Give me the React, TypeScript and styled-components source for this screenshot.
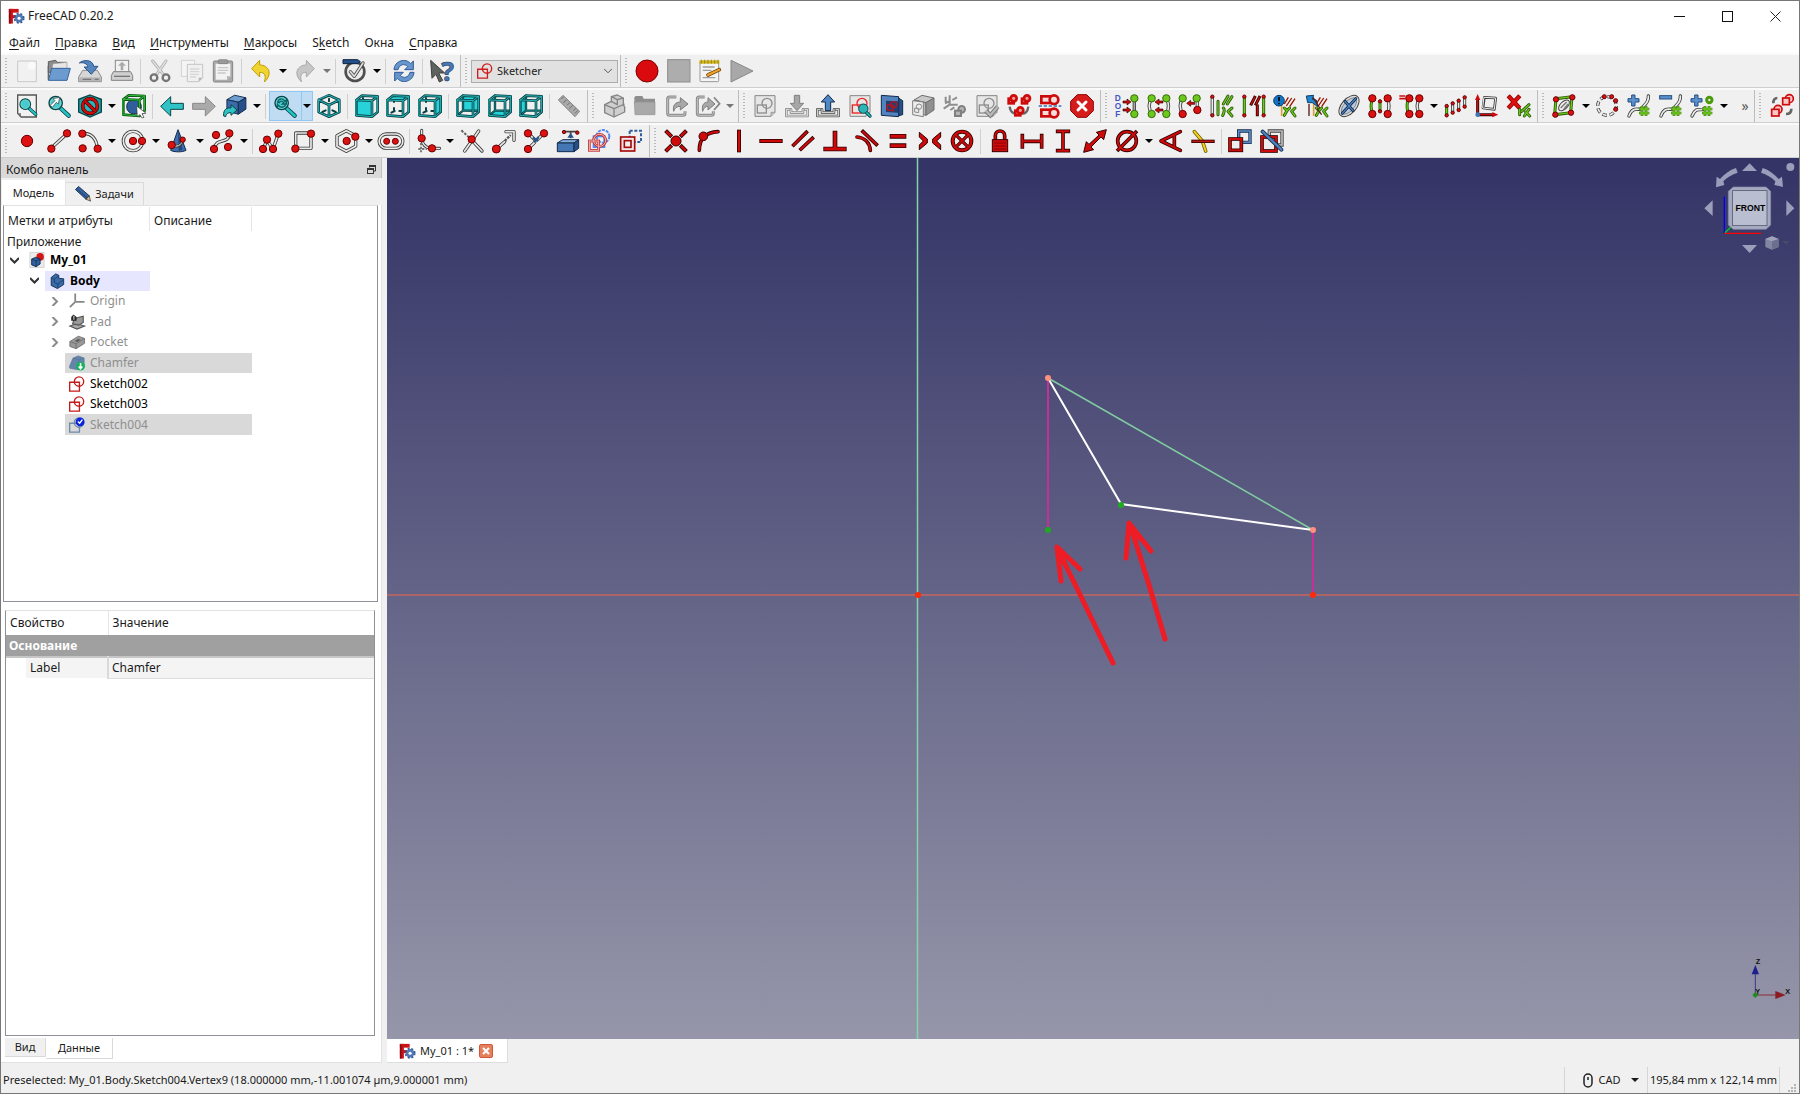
import React, { ReactNode } from "react";
import styled, { createGlobalStyle } from "styled-components";

const UI_FONT = '"Noto Sans", "Open Sans", sans-serif';

const GlobalStyle = createGlobalStyle`
  *, *::before, *::after { box-sizing: border-box; }
  body { margin: 0; background: #6e6e6e; overflow: hidden; }
  button, select, table { font: inherit; color: inherit; }
  button { border: 0; padding: 0; margin: 0; background: none; }
  ul { list-style: none; margin: 0; padding: 0; }
`;

/* ---------- drawing primitives (icons use a 72-unit box) ---------- */

const RED = "#cf0a0a";
const DARK_RED = "#330000";
const TEAL = "#22c3c6";
const DARK_TEAL = "#0a4446";
const BLUE = "#4d82bd";
const NAVY = "#122a4a";
const GREEN = "#6cc81c";
const GREY = "#a9a9a9";
const DARK_GREY = "#858585";

type LineProps = { d: string; w?: number; c?: string; o?: string };
const Tube = ({ d, w = 5, c = "#ececec", o = "#3b3d3a" }: LineProps) => (
  <g fill="none" strokeLinecap="round" strokeLinejoin="round">
    <path d={d} stroke={o} strokeWidth={w + 5} />
    <path d={d} stroke={c} strokeWidth={w} />
  </g>
);
const Bar3 = ({ d, w = 7, c = RED, o = DARK_RED }: LineProps) => (
  <g fill="none" strokeLinecap="square" strokeLinejoin="miter">
    <path d={d} stroke={o} strokeWidth={w + 5} />
    <path d={d} stroke={c} strokeWidth={w} />
  </g>
);
const Dot = ({ x, y, r = 11, c = "#dc1212", o = "#6a0000" }: { x: number; y: number; r?: number; c?: string; o?: string }) => (
  <circle cx={x} cy={y} r={r} fill={c} stroke={o} strokeWidth="3" />
);
const Glass = ({ x = 0, y = 0, s = 1, children }: { x?: number; y?: number; s?: number; children?: ReactNode }) => (
  <g transform={`translate(${x} ${y}) scale(${s})`}>
    <Tube d="M40 42L65 65" w={8} c={TEAL} o={DARK_TEAL} />
    <circle cx="26" cy="27" r="20" fill="#35b9bb" stroke={DARK_TEAL} strokeWidth="4" />
    <circle cx="26" cy="27" r="16" fill="#49cbcd" stroke="#8fe6e7" strokeWidth="2" />
    {children}
  </g>
);
const SketchShape = ({ c = RED, w = 6 }: { c?: string; w?: number }) => (
  <g fill="none" stroke={c} strokeWidth={w}>
    <path d="M3 28H47V68H3Z" />
    <circle cx="45" cy="25" r="21" />
  </g>
);
const SketchPage = ({ c = "#8e8e8e" }: { c?: string }) => (
  <>
    <path d="M6 5H66V55L54 67H6Z" fill="#e6e6e6" stroke="#858585" strokeWidth="3" />
    <path d="M54 67V55H66" fill="#c5c5c5" stroke="#858585" strokeWidth="2" />
    <rect x="13" y="33" width="27" height="24" fill="none" stroke={c} strokeWidth="4" />
    <circle cx="42" cy="28" r="15" fill="none" stroke={c} strokeWidth="4" />
  </>
);
const WIRE = {
  front: "4,18 51,20 51,68 4,64",
  top: "4,18 51,20 68,7 21,5",
  right: "51,20 68,7 68,54 51,68",
  rear: "21,5 68,7 68,54 21,50",
  bottom: "4,64 51,68 68,54 21,50",
  left: "4,18 21,5 21,50 4,64",
};
const ViewCube = ({ face }: { face: keyof typeof WIRE }) => {
  const inFront = face === "front" || face === "top" || face === "right";
  const fill = <polygon points={WIRE[face]} fill="#27d3d8" stroke={DARK_TEAL} strokeWidth="2" />;
  return (
    <>
      {!inFront && fill}
      {!inFront && <Tube d="M21 5V50H66M21 50L4 64" w={2} c="#1c9a9c" o={DARK_TEAL} />}
      {inFront && <Tube d="M24 12V24M24 42V48M26 51L16 56M40 51H46" w={1} c={DARK_TEAL} o={DARK_TEAL} />}
      {inFront && fill}
      <Tube d="M4 18L51 20V68L4 64ZM4 18L21 5L68 7L51 20M68 7V54L51 68" w={3} c="#27b9bd" o={DARK_TEAL} />
    </>
  );
};
const SolidCube = ({ a = "#6f9fd2", b = "#3b6ba8", c = "#27508a", o = NAVY, t = "" }) => (
  <g transform={t} stroke={o} strokeWidth="3" strokeLinejoin="round">
    <path d="M6 20L30 6L66 14L42 28Z" fill={a} />
    <path d="M6 20L42 28V66L6 56Z" fill={b} />
    <path d="M42 28L66 14V50L42 66Z" fill={c} />
  </g>
);
const Tray = ({ c }: { c: string }) => <Tube d="M12 46H4V66H68V46H60M18 46V56H54V46" w={3} c="#e8e8e8" o={c} />;
const Caliper = ({ d }: { d: string }) => <Tube d={d} w={4} c={GREEN} o="#2c5a06" />;
const Hash = ({ x = 34, y = 34 }: { x?: number; y?: number }) => (
  <g transform={`translate(${x} ${y})`}>
    <path d="M11 2V32M23 2V32M2 11H33M2 23H33" stroke="#3b7a08" strokeWidth="8" />
    <path d="M11 3V31M23 3V31M3 11H32M3 23H32" stroke={GREEN} strokeWidth="4" />
  </g>
);
const SmallArrow = ({ x, y, left = false }: { x: number; y: number; left?: boolean }) => (
  <path
    transform={`translate(${x} ${y})${left ? " scale(-1 1)" : ""}`}
    d="M-12 -3H0V-9L12 0L0 9V3H-12Z"
    fill={RED}
    stroke={DARK_RED}
    strokeWidth="2"
  />
);
const Linked = () => (
  <>
    <path d="M46 10L34 30M56 12L40 36M66 14L50 38" stroke="#9a1500" strokeWidth="4" />
    <path d="M26 14V66" stroke="#d9a03a" strokeWidth="5" />
    <Caliper d="M34 42L42 50L34 64M66 42L56 52L66 66M42 50L50 42" />
  </>
);

const icons: Record<string, ReactNode> = {
  newFile: (
    <>
      <path d="M8 6H64V68H8Z" fill="#f1f1f1" stroke="#c9c9c9" strokeWidth="3" />
      <circle cx="50" cy="20" r="12" fill="#fafafa" />
    </>
  ),
  open: (
    <>
      <path d="M4 8L26 4L30 10H58V40H4Z" fill="#8b8b8b" stroke="#5c5c5c" strokeWidth="3" />
      <path d="M18 14L60 10V34H14Z" fill="#e6e6e6" stroke="#999" strokeWidth="2" />
      <path d="M14 28H70L60 64H4Z" fill="#6c9bd0" stroke="#33639e" strokeWidth="3" />
      <path d="M4 20V62" stroke="#666" strokeWidth="4" />
    </>
  ),
  save: (
    <>
      <path d="M14 34H58L70 54V68H2V54Z" fill="#d6d6d6" stroke="#8b8b8b" strokeWidth="3" />
      <path d="M4 55H68V67H4Z" fill="#b5b5b5" />
      <path d="M14 61H40M50 61H62" stroke="#777" strokeWidth="4" />
      <path d="M4 12C14 2 44 0 47 22H60L40 46L18 24H30C28 14 16 9 4 12Z" fill="#5585bd" stroke="#2c578e" strokeWidth="3" />
    </>
  ),
  print: (
    <>
      <rect x="16" y="4" width="40" height="36" fill="#f1f1f1" stroke="#8a8a8a" strokeWidth="3" />
      <path d="M36 8L48 20H40V34H32V20H24Z" fill="#aaa" />
      <path d="M10 38H62L68 50V64H4V50Z" fill="#cfcfcf" stroke="#838383" strokeWidth="3" />
      <path d="M12 52H60" stroke="#777" strokeWidth="4" />
    </>
  ),
  cut: (
    <>
      <Tube d="M14 6L46 46M54 6L26 46" w={4} c="#e3e3e3" o="#ababab" />
      <g fill="none" stroke="#757575" strokeWidth="7">
        <circle cx="18" cy="56" r="10" />
        <circle cx="54" cy="56" r="10" />
      </g>
    </>
  ),
  copy: (
    <>
      <path d="M4 4H44V52H4Z" fill="#f4f4f4" stroke="#d2d2d2" strokeWidth="3" />
      <path d="M22 16H68V56L56 68H22Z" fill="#f0f0f0" stroke="#c4c4c4" strokeWidth="3" />
      <path d="M30 30H58M30 38H58M30 46H56M30 54H48" stroke="#d6d6d6" strokeWidth="4" />
      <path d="M56 68V56H68Z" fill="#b5b5b5" />
    </>
  ),
  paste: (
    <>
      <rect x="7" y="6" width="58" height="63" rx="4" fill="#aaa" stroke="#858585" strokeWidth="3" />
      <path d="M14 14H58V52L48 62H14Z" fill="#f2f2f2" />
      <rect x="22" y="2" width="28" height="12" rx="3" fill="#999" stroke="#777" strokeWidth="2" />
      <path d="M20 26H52M20 34H52M20 42H44" stroke="#c8c8c8" strokeWidth="4" />
      <path d="M48 62V52H58Z" fill="#b0b0b0" />
    </>
  ),
  undo: <path d="M32 4V18C60 18 72 46 46 69C52 50 48 40 32 40V54L8 29Z" fill="#f0d531" stroke="#c19a00" strokeWidth="3" />,
  redo: <path d="M40 4V18C12 18 0 46 26 69C20 50 24 40 40 40V54L64 29Z" fill="#c6c6c6" stroke="#a9a9a9" strokeWidth="3" />,
  check: (
    <>
      <circle cx="36" cy="38" r="28" fill="#ececec" stroke="#4c4f4b" strokeWidth="8" />
      <Tube d="M22 38L34 52L60 12" w={5} c="#ddd" o="#4a4c49" />
      <path d="M0 2H44L52 8L44 14H0Z" fill="#24508a" stroke="#0c2342" strokeWidth="3" />
    </>
  ),
  refresh: (
    <>
      <path d="M6 32C8 4 42 -4 56 14L64 6V32H38L47 23C38 12 22 16 18 32Z" fill="#6796cd" stroke="#2c5a99" strokeWidth="3" />
      <path d="M66 40C64 68 30 76 16 58L8 66V40H34L25 49C34 60 50 56 54 40Z" fill="#6796cd" stroke="#2c5a99" strokeWidth="3" />
    </>
  ),
  whatsThis: (
    <>
      <path d="M2 4L44 42H26L38 64L28 69L18 46L6 58Z" fill="#5f625e" stroke="#3e403d" strokeWidth="3" />
      <text x="34" y="66" fontSize="80" fontWeight="700" fontFamily={UI_FONT} fill="#4b76ad" stroke="#223f68" strokeWidth="2">?</text>
    </>
  ),
  record: <circle cx="36" cy="36" r="33" fill="#d90b0e" stroke="#7d0000" strokeWidth="3" />,
  stop: <rect x="2" y="2" width="67" height="67" fill="#adadad" stroke="#8c8c8c" strokeWidth="3" />,
  macroEdit: (
    <>
      <rect x="6" y="8" width="56" height="60" rx="3" fill="#f4f4f4" stroke="#999" strokeWidth="3" />
      <path d="M4 4H64V14H4Z" fill="#d3b61c" />
      <path d="M10 2V14M20 2V14M30 2V14M40 2V14M50 2V14M60 2V14" stroke="#7c6a10" strokeWidth="2" />
      <path d="M14 24H50M14 34H40M14 56H52" stroke="#9d9d9d" strokeWidth="4" />
      <Tube d="M30 48L64 32" w={6} c="#f0a32d" o="#7b4b06" />
    </>
  ),
  play: <path d="M3 4L69 36L3 69Z" fill="#a8a8a8" stroke="#888" strokeWidth="3" />,

  fitAll: (
    <>
      <path d="M8 3H64V69H18L8 58Z" fill="#f2f2f2" stroke="#555753" strokeWidth="4" />
      <path d="M8 58H18V69Z" fill="#777" />
      <Glass x={10} y={9} s={0.8} />
    </>
  ),
  fitSelection: (
    <Glass>
      <path d="M38 10L34 30L28 25L16 40L10 34L24 20L18 14Z" fill="#fff" stroke="#333" strokeWidth="2" />
    </Glass>
  ),
  drawStyle: (
    <>
      <path d="M36 3L70 16V54L36 69L2 54V16Z" fill="#1aa2a5" stroke={DARK_TEAL} strokeWidth="4" />
      <circle cx="36" cy="36" r="22" fill="#22b7ba" stroke="#4a0000" strokeWidth="11" />
      <circle cx="36" cy="36" r="22" fill="none" stroke={RED} strokeWidth="7" />
      <path d="M21 21L51 51" stroke="#4a0000" strokeWidth="11" />
      <path d="M21 21L51 51" stroke={RED} strokeWidth="7" />
    </>
  ),
  boundBox: (
    <>
      <circle cx="36" cy="38" r="22" fill="#2f5e9d" stroke={NAVY} strokeWidth="3" />
      <Tube d="M4 16L52 18V66L4 62ZM4 16L20 4L68 6L52 18M68 6V50L52 66" w={3} c="#2dc43a" o="#0c5414" />
      <path d="M44 36L72 58L60 59L66 70L60 72L54 62L46 68Z" fill="#fff" stroke="#333" strokeWidth="2" />
    </>
  ),
  back: <path d="M2 37L32 8V28H70V46H32V66Z" fill="#2fc3c6" stroke={DARK_TEAL} strokeWidth="3" />,
  forward: <path d="M70 37L40 8V28H2V46H40V66Z" fill="#aaa" stroke="#888" strokeWidth="3" />,
  linkGo: (
    <>
      <SolidCube t="translate(6 -2) scale(0.95)" />
      <path d="M2 66C0 46 12 40 24 42V32L42 48L24 64V56C16 56 10 58 8 68Z" fill="#2fc3c6" stroke={DARK_TEAL} strokeWidth="3" />
    </>
  ),
  zoomRefresh: (
    <Glass>
      <path d="M14 24C18 12 30 12 36 22L40 18V30H28L32 26C28 20 22 20 19 26ZM38 32C34 42 22 42 17 34L13 38V28" fill="none" stroke="#0d6264" strokeWidth="4" />
    </Glass>
  ),
  isometric: (
    <>
      <Tube d="M36 14V22M16 54L26 49M56 54L46 49" w={1} c={DARK_TEAL} o={DARK_TEAL} />
      <Tube d="M36 4L67 18V54L36 68L5 54V18ZM5 18L36 33L67 18M36 33V68" w={3} c="#27b9bd" o={DARK_TEAL} />
    </>
  ),
  front: <ViewCube face="front" />,
  top: <ViewCube face="top" />,
  right: <ViewCube face="right" />,
  rear: <ViewCube face="rear" />,
  bottom: <ViewCube face="bottom" />,
  left: <ViewCube face="left" />,
  measure: (
    <>
      <path d="M4 18L18 4L68 52L54 68Z" fill={GREY} stroke={DARK_GREY} strokeWidth="3" />
      <path d="M20 8L13 15M29 17L19 27M38 26L31 33M47 34L37 44M56 43L49 50M62 50L54 58" stroke="#6d6d6d" strokeWidth="3" />
    </>
  ),
  part: (
    <g fill="#cfcfcf" stroke={DARK_GREY} strokeWidth="4" strokeLinejoin="round">
      <path d="M8 32L28 22V8L46 3L64 12V34L68 38V54L36 69L8 56Z" />
      <path d="M28 8L46 17L64 12M46 17V34M8 32L36 44L68 30M36 44V69M28 22L46 32" fill="none" />
    </g>
  ),
  group: (
    <>
      <path d="M4 10L8 6H28L32 14H66V30H4Z" fill="#8e8e8e" />
      <path d="M4 24H66V62H6Z" fill="#a9a9a9" stroke="#939393" strokeWidth="2" />
    </>
  ),
  link: (
    <>
      <path d="M34 9H14Q8 9 8 15V58Q8 64 14 64H54Q60 64 60 58V52" fill="none" stroke="#8a8a8a" strokeWidth="9" />
      <path d="M34 9H14Q8 9 8 15V58Q8 64 14 64H54Q60 64 60 58V52" fill="none" stroke="#c4c4c4" strokeWidth="3" />
      <path d="M26 52C22 34 32 24 46 24V11L69 30L46 48V37C35 37 29 42 26 52Z" fill="#a8a8a8" stroke="#7d7d7d" strokeWidth="3" />
    </>
  ),
  links: (
    <>
      <path d="M26 9H10Q4 9 4 15V58Q4 64 10 64H46Q52 64 52 58V52" fill="none" stroke="#8a8a8a" strokeWidth="9" />
      <path d="M26 9H10Q4 9 4 15V58Q4 64 10 64H46Q52 64 52 58V52" fill="none" stroke="#c4c4c4" strokeWidth="3" />
      <path d="M20 52C16 34 24 24 36 24V11L57 30L36 48V37C28 37 23 42 20 52Z" fill="#a8a8a8" stroke="#7d7d7d" strokeWidth="3" />
      <path d="M54 10L71 29L54 48" fill="none" stroke="#858585" strokeWidth="5" />
    </>
  ),
  sketchNew: <SketchPage />,
  sketchLeave: (
    <>
      <Tray c="#8a8a8a" />
      <path d="M28 4H44V28H56L36 50L16 28H28Z" fill="#a6a6a6" stroke="#808080" strokeWidth="3" />
    </>
  ),
  sketchEdit: (
    <>
      <Tray c="#555753" />
      <path d="M28 50H44V24H56L36 2L16 24H28Z" fill="#4f86c4" stroke={NAVY} strokeWidth="3" />
    </>
  ),
  sketchView: (
    <>
      <SketchPage c="#ef2222" />
      <Tube d="M52 52L66 66" w={5} c={TEAL} o={DARK_TEAL} />
      <circle cx="46" cy="44" r="14" fill="#2cb5b8" stroke={DARK_TEAL} strokeWidth="3" />
    </>
  ),
  sketchSection: (
    <>
      <path d="M52 10L68 20V62L52 66Z" fill="#27508a" stroke={NAVY} strokeWidth="3" />
      <path d="M4 4L56 8V68L4 64Z" fill="#5183bf" stroke={NAVY} strokeWidth="3" />
      <path d="M18 20L54 22V56L18 54Z" fill="#263c6c" />
      <path d="M22 32L40 34V50L22 48Z" fill="none" stroke="#b31522" strokeWidth="4" />
      <circle cx="41" cy="32" r="9" fill="none" stroke="#b31522" strokeWidth="4" />
    </>
  ),
  sketchMap: (
    <>
      <SolidCube a="#c9c9c9" b="#b5b5b5" c="#909090" o="#6f6f6f" t="translate(0 -2)" />
      <path d="M2 20L34 24V68L2 62Z" fill="#ececec" stroke="#808080" strokeWidth="3" />
      <path d="M8 42L20 44V56L8 54Z" fill="none" stroke="#8a8a8a" strokeWidth="3" />
      <circle cx="21" cy="38" r="8" fill="none" stroke="#8a8a8a" strokeWidth="3" />
    </>
  ),
  reorient: (
    <>
      <path d="M20 4V32L2 44M20 32H44M8 8V24M28 18L42 10M6 28L18 22M22 48L34 40" stroke="#8e8e8e" strokeWidth="6" fill="none" />
      <circle cx="56" cy="46" r="10" fill="#b5b5b5" stroke="#808080" strokeWidth="6" />
      <rect x="36" y="50" width="18" height="16" fill="#b5b5b5" stroke="#808080" strokeWidth="6" />
    </>
  ),
  validate: (
    <>
      <SketchPage />
      <path d="M32 50L46 64L68 38" fill="none" stroke="#777" strokeWidth="13" />
      <path d="M32 50L46 64L68 38" fill="none" stroke="#b9b9b9" strokeWidth="7" />
    </>
  ),
  merge: (
    <>
      <path d="M8 38C10 56 22 60 30 58M64 38C62 56 52 60 44 58" fill="none" stroke="#666" strokeWidth="7" />
      {["translate(0 0)", "translate(40 0)", "translate(20 36)"].map((t) => (
        <g key={t} transform={t} fill="#eba0a0" stroke={RED} strokeWidth="8">
          <rect x="5" y="14" width="15" height="14" />
          <circle cx="20" cy="13" r="9" />
        </g>
      ))}
    </>
  ),
  mirror: (
    <>
      {[-14, 26].map((y) => (
        <g key={y} transform={`translate(0 ${y})`} fill="#f3dede" stroke={RED} strokeWidth="8">
          <rect x="10" y="21" width="28" height="20" />
          <circle cx="48" cy="31" r="13" />
        </g>
      ))}
      <path d="M2 36H70" stroke="#3a6fb4" strokeWidth="5" strokeDasharray="10 5" />
    </>
  ),
  stopOp: (
    <>
      <path d="M22 2H50L70 22V50L50 70H22L2 50V22Z" fill="#d51c1c" stroke="#930000" strokeWidth="3" />
      <path d="M24 24L48 48M48 24L24 48" stroke="#fff" strokeWidth="9" strokeLinecap="round" />
    </>
  ),
  selDof: (
    <>
      <g fontFamily='"Liberation Sans", sans-serif' fontSize="25" fontWeight="700" fill="#3c57c2">
        <text x="-1" y="20">D</text>
        <text x="-1" y="44">O</text>
        <text x="1" y="69">F</text>
      </g>
      <Tube d="M58 14V58" w={5} c="#aaa" />
      <SmallArrow x={36} y={24} />
      <SmallArrow x={36} y={48} />
      <Dot x={58} y={13} c={GREEN} o="#376b0b" />
      <Dot x={58} y={60} c={GREEN} o="#376b0b" />
    </>
  ),
  closeShape: (
    <>
      <Tube d="M14 14C4 28 6 46 14 60M58 14C66 28 66 46 58 60" w={5} />
      <SmallArrow x={36} y={24} left />
      <SmallArrow x={36} y={48} left />
      {[[14, 13], [58, 13], [14, 60], [58, 60]].map(([x, y]) => <Dot key={`${x}${y}`} x={x} y={y} c={GREEN} o="#376b0b" />)}
    </>
  ),
  connect: (
    <>
      <Tube d="M14 14C4 28 6 46 14 60M58 14V48" w={5} />
      <SmallArrow x={38} y={28} left />
      <Dot x={14} y={13} c={GREEN} o="#376b0b" />
      <Dot x={56} y={13} c={GREEN} o="#376b0b" />
      <Dot x={14} y={60} />
      <Dot x={58} y={48} />
    </>
  ),
  selConstraints: (
    <>
      <Tube d="M7 10V62" w={5} />
      <Dot x={7} y={8} r={5} />
      <Dot x={7} y={64} r={5} />
      <Caliper d="M24 22V62M40 30L54 6M52 30L66 8M40 42C46 46 40 62 38 64M66 42L54 52L66 66" />
    </>
  ),
  selElements: (
    <>
      <Caliper d="M7 10V62M65 10V62" />
      <Bar3 d="M28 30L38 10M42 30L52 10M46 36V62" w={4} />
      <Dot x={7} y={8} r={5} />
      <Dot x={7} y={64} r={5} />
      <Dot x={65} y={8} r={5} />
      <Dot x={65} y={64} r={5} />
    </>
  ),
  selRedundant: (
    <>
      <Linked />
      <circle cx="18" cy="20" r="16" fill="#1274c4" stroke="#0a3c6c" strokeWidth="3" />
      <path d="M18 9V22M18 27V31" stroke="#000" strokeWidth="5" />
    </>
  ),
  selConflict: (
    <>
      <Linked />
      <path d="M4 6L26 4L22 16L34 18L38 38L22 26L8 26Z" fill="#1f86d2" stroke="#123c66" strokeWidth="3" />
      <path d="M12 30V66M50 62L36 44M24 10L44 42" stroke="#5a1a10" strokeWidth="4" />
    </>
  ),
  internal: (
    <>
      <ellipse cx="36" cy="36" rx="38" ry="22" transform="rotate(-48 36 36)" fill="#dcdcdc" stroke="#444" strokeWidth="3" />
      <ellipse cx="36" cy="36" rx="30" ry="15" transform="rotate(-48 36 36)" fill="#b9cbe0" stroke="#666" strokeWidth="2" />
      <Tube d="M16 58L56 14M24 22L48 50" w={4} c="#4e86c4" o={NAVY} />
    </>
  ),
  symmetry: (
    <>
      <Caliper d="M14 14C8 28 8 46 14 60" />
      <Tube d="M58 14C64 28 64 46 58 60" w={5} />
      <Caliper d="M36 24V50" />
      <Dot x={36} y={22} r={5} />
      <Dot x={36} y={52} r={5} />
      {[[13, 13], [59, 13], [13, 60], [59, 60]].map(([x, y]) => <Dot key={`${x}${y}`} x={x} y={y} />)}
    </>
  ),
  clone: (
    <>
      <path d="M-2 6H16M-2 14H16" stroke={RED} strokeWidth="5" />
      <Caliper d="M26 14C20 28 20 46 26 60" />
      <Tube d="M58 14C50 28 50 46 58 60" w={5} />
      {[[28, 13], [58, 13], [28, 60], [58, 60]].map(([x, y]) => <Dot key={`${x}${y}`} x={x} y={y} />)}
    </>
  ),
  array: (
    <>
      <Caliper d="M8 38V62" />
      <Tube d="M26 28V54M44 20V46M62 12V38" w={4} />
      {[[8, 36], [8, 64], [26, 28], [26, 56], [44, 20], [44, 48], [62, 10], [62, 38]].map(([x, y]) => <Dot key={`${x}${y}`} x={x} y={y} r={5} />)}
    </>
  ),
  removeAxes: (
    <>
      <Tube d="M28 10L62 12L58 46L24 42Z" w={3} />
      <Tube d="M8 62V20M8 62H54" w={4} c={RED} o={DARK_RED} />
      <path d="M8 0L16 18H0ZM70 62L52 54V70Z" fill={RED} />
      <circle cx="8" cy="62" r="7" fill="#3f79bb" />
    </>
  ),
  deleteAll: (
    <>
      <Bar3 d="M8 10L34 38M34 10L8 38" w={8} c="#dd1111" o="#990000" />
      <Caliper d="M38 46V62M44 52L66 32M52 66L66 46M56 54L68 66" />
    </>
  ),
  polygonGeo: (
    <>
      <Caliper d="M12 14L60 8L56 56L8 62Z" />
      <ellipse cx="36" cy="34" rx="20" ry="11" transform="rotate(-45 36 34)" fill="#eee" stroke="#444" strokeWidth="3" />
      <path d="M26 42L44 24M34 48L48 30" stroke="#777" strokeWidth="4" />
      {[[12, 16], [61, 10], [57, 56], [10, 62]].map(([x, y]) => <Dot key={`${x}${y}`} x={x} y={y} r={8} />)}
    </>
  ),
  circleGeo: (
    <>
      <circle cx="36" cy="36" r="28" fill="none" stroke="#444" strokeWidth="10" strokeDasharray="14 8" />
      <circle cx="36" cy="36" r="28" fill="none" stroke="#eee" strokeWidth="5" strokeDasharray="12 10" strokeDashoffset="-1" />
      {[[28, 8], [50, 8], [62, 20], [62, 46]].map(([x, y]) => <Dot key={`${x}${y}`} x={x} y={y} r={6} />)}
    </>
  ),
  knotPlus: (
    <>
      <Tube d="M6 66C20 30 40 56 46 40C54 32 66 24 64 6" w={5} />
      <path d="M14 3H24V14H36V24H24V36H14V24H3V14H14Z" fill="#5a92cf" stroke="#244d80" strokeWidth="3" />
      <Hash />
    </>
  ),
  knotMinus: (
    <>
      <Tube d="M6 66C20 30 40 56 46 40C54 32 66 24 64 6" w={5} />
      <rect x="2" y="5" width="36" height="10" fill="#5a92cf" stroke="#244d80" strokeWidth="3" />
      <Hash />
    </>
  ),
  knotInsert: (
    <>
      <Tube d="M6 66C20 34 30 54 42 44" w={5} />
      <path d="M14 3H24V14H36V24H24V36H14V24H3V14H14Z" fill="#5a92cf" stroke="#244d80" strokeWidth="3" />
      <Hash />
      <circle cx="58" cy="18" r="8" fill="none" stroke="#4a9a0c" strokeWidth="9" />
    </>
  ),
  swapGeo: (
    <>
      <g fill="#f6caca" stroke={RED} strokeWidth="5">
        <circle cx="58" cy="14" r="12" />
        <rect x="38" y="12" width="20" height="20" />
        <circle cx="24" cy="46" r="12" />
        <rect x="5" y="46" width="22" height="20" />
      </g>
      <path d="M10 28C10 16 14 12 22 12M64 44C64 56 58 60 48 60" fill="none" stroke="#666" strokeWidth="8" />
    </>
  ),

  point: <Dot x={36} y={36} r={17} />,
  line: (<><Tube d="M12 58L60 14" w={5} /><Dot x={13} y={59} /><Dot x={60} y={13} /></>),
  arc: (<><Tube d="M12 14C40 10 56 30 58 58" w={5} /><Dot x={13} y={14} /><Dot x={14} y={58} /><Dot x={59} y={59} /></>),
  circle: (
    <>
      <circle cx="33" cy="36" r="29" fill="none" stroke="#3b3d3a" strokeWidth="10" />
      <circle cx="33" cy="36" r="29" fill="none" stroke="#ececec" strokeWidth="5" />
      <Dot x={33} y={36} /><Dot x={60} y={36} />
    </>
  ),
  conic: (
    <>
      <path d="M36 2L60 64C50 70 24 70 14 64Z" fill="#3f70ad" stroke={NAVY} strokeWidth="3" />
      <path d="M36 6L50 62L38 66Z" fill="#23477c" />
      <Tube d="M18 48C32 56 46 50 50 34" w={3} />
      <Dot x={17} y={48} /><Dot x={50} y={32} r={8} />
    </>
  ),
  bspline: (
    <>
      <Tube d="M12 60C18 24 54 48 60 14" w={5} />
      <Dot x={18} y={18} /><Dot x={58} y={13} /><Dot x={12} y={60} /><Dot x={54} y={54} />
    </>
  ),
  polyline: (
    <>
      <Tube d="M12 60L24 34L42 60L58 14" w={5} />
      <Dot x={12} y={60} /><Dot x={24} y={32} /><Dot x={42} y={60} /><Dot x={58} y={14} />
    </>
  ),
  rectangle: (<><Tube d="M14 12H60V58H14Z" w={5} /><Dot x={60} y={14} /><Dot x={13} y={59} /></>),
  hexagon: (
    <>
      <Tube d="M34 5L62 20V52L34 67L6 52V20Z" w={5} />
      <Dot x={35} y={36} /><Dot x={61} y={23} />
    </>
  ),
  slot: (
    <>
      <Tube d="M22 15H50A21 21 0 0 1 50 58H22A21 21 0 0 1 22 15Z" w={5} />
      <Dot x={23} y={37} r={9} /><Dot x={49} y={37} r={9} />
    </>
  ),
  fillet: (
    <>
      <Tube d="M14 4V30C16 46 26 56 42 58H68" w={4} />
      <path d="M12 42V70M4 60H30" stroke="#777" strokeWidth="6" strokeDasharray="7 4" />
      <Dot x={14} y={28} /><Dot x={45} y={58} />
    </>
  ),
  trim: (
    <>
      <Tube d="M56 6L14 66M36 34L66 66" w={5} />
      <path d="M4 4L30 28" stroke="#666" strokeWidth="6" strokeDasharray="8 4" />
      <Dot x={35} y={31} />
    </>
  ),
  extend: (
    <>
      <Tube d="M16 58L38 38" w={5} />
      <path d="M38 36L56 18" stroke="#555" strokeWidth="7" strokeDasharray="8 3" />
      <Tube d="M42 8H66V34" w={5} />
      <Dot x={13} y={60} r={12} />
    </>
  ),
  split: (
    <>
      <Tube d="M12 12L32 32M60 12L40 32M32 40L14 58" w={5} />
      <path d="M26 26L42 36M44 24L30 40" stroke="#2b5489" strokeWidth="7" />
      <Dot x={12} y={13} /><Dot x={60} y={13} /><Dot x={12} y={60} />
    </>
  ),
  external: (
    <>
      <path d="M4 42L20 32H68L54 42Z" fill="#86b0de" stroke={NAVY} strokeWidth="3" />
      <path d="M4 42H54V68H4Z" fill="#4478b5" stroke={NAVY} strokeWidth="3" />
      <path d="M54 42L68 32V58L54 68Z" fill="#27508a" stroke={NAVY} strokeWidth="3" />
      <path d="M22 8H66M44 10V28" stroke="#444" strokeWidth="5" />
      <path d="M44 12L54 26H34Z" fill="#27508a" />
      <Dot x={24} y={9} r={5} /><Dot x={64} y={11} r={5} />
    </>
  ),
  carbon: (
    <>
      <g fill="none" stroke="#5588ee" strokeWidth="6">
        <rect x="20" y="22" width="32" height="32" />
        <circle cx="48" cy="22" r="19" strokeDasharray="9 3" />
      </g>
      <g fill="none" stroke="#c03030" strokeWidth="8">
        <rect x="7" y="36" width="28" height="28" />
        <circle cx="38" cy="34" r="18" />
      </g>
      <g fill="none" stroke="#f1bcbc" strokeWidth="3">
        <rect x="7" y="36" width="28" height="28" />
        <circle cx="38" cy="34" r="18" />
      </g>
    </>
  ),
  construction: (
    <>
      <rect x="32" y="5" width="34" height="34" fill="none" stroke="#2f5f9e" strokeWidth="6" strokeDasharray="9 5" />
      <rect x="5" y="24" width="42" height="42" fill="#f3e6e6" stroke="#a40c0c" strokeWidth="5" />
      <rect x="16" y="35" width="20" height="20" fill="#f0f0f0" stroke="#a40c0c" strokeWidth="5" />
    </>
  ),

  coincident: (
    <>
      <Bar3 d="M9 9L19 19M63 9L53 19M9 63L19 53M63 63L53 53" />
      <circle cx="36" cy="36" r="15" fill={RED} stroke={DARK_RED} strokeWidth="3" />
    </>
  ),
  pointOn: (
    <>
      <Tube d="M10 64C10 28 30 10 66 8" w={6} c={RED} o={DARK_RED} />
      <circle cx="22" cy="22" r="13" fill={RED} stroke={DARK_RED} strokeWidth="3" />
    </>
  ),
  vertical: <Bar3 d="M36 8V64" />,
  horizontal: <Bar3 d="M7 36H65" />,
  parallel: <Bar3 d="M8 48L46 10M30 60L64 28" w={6} />,
  perpendicular: <Bar3 d="M36 12V56M8 60H64" w={9} />,
  tangent: (<><Bar3 d="M24 8L64 46" w={6} /><Tube d="M6 24C28 26 44 40 46 64" w={6} c={RED} o={DARK_RED} /></>),
  equal: <Bar3 d="M18 22H54M18 50H54" w={9} />,
  symmetric: <path d="M4 10L28 30V42L4 62V48L16 36L4 24ZM68 10L44 30V42L68 62V48L56 36L68 24Z" fill={RED} stroke={DARK_RED} strokeWidth="3" />,
  block: (
    <>
      <circle cx="36" cy="36" r="28" fill="none" stroke={DARK_RED} strokeWidth="12" />
      <path d="M16 16L56 56M56 16L16 56" stroke={DARK_RED} strokeWidth="10" />
      <circle cx="36" cy="36" r="28" fill="none" stroke={RED} strokeWidth="7" />
      <path d="M16 16L56 56M56 16L16 56" stroke={RED} strokeWidth="5" />
    </>
  ),
  lock: (
    <>
      <Tube d="M22 34V20A14 14 0 0 1 50 20V34" w={6} c={RED} o={DARK_RED} />
      <rect x="13" y="32" width="46" height="36" fill={RED} stroke={DARK_RED} strokeWidth="3" />
      <path d="M18 42H54M18 51H54M18 60H54" stroke="#8b0000" strokeWidth="3" />
    </>
  ),
  distX: <Bar3 d="M7 20V54M65 20V54M7 37H65" w={6} />,
  distY: <Bar3 d="M20 7H52M20 65H52M36 7V65" w={6} />,
  distance: <path d="M70 2L62 32L54 24L24 54L32 62L2 70L10 38L18 46L48 18L40 10Z" fill={RED} stroke={DARK_RED} strokeWidth="3" />,
  diameter: (
    <>
      <circle cx="36" cy="36" r="28" fill="none" stroke={DARK_RED} strokeWidth="11" />
      <path d="M6 66L66 6" stroke={DARK_RED} strokeWidth="11" />
      <circle cx="36" cy="36" r="28" fill="none" stroke={RED} strokeWidth="6" />
      <path d="M8 64L64 8" stroke={RED} strokeWidth="6" />
    </>
  ),
  angle: <Tube d="M64 8L6 36L64 64M46 18V54" w={6} c={RED} o={DARK_RED} />,
  snell: (
    <>
      <Tube d="M10 8L34 36L44 66" w={6} c="#f2d21a" o="#6f5f00" />
      <Bar3 d="M6 37H66" w={5} c="#c01a10" />
    </>
  ),
  toggleDriving: (
    <>
      <Bar3 d="M32 6H66V40H32Z" w={5} c="#5c90cb" o={NAVY} />
      <rect x="6" y="30" width="34" height="34" fill="#eee" stroke={DARK_RED} strokeWidth="11" />
      <rect x="6" y="30" width="34" height="34" fill="none" stroke={RED} strokeWidth="6" />
    </>
  ),
  toggleActive: (
    <>
      <Bar3 d="M28 6H66V48H28Z" w={5} c="#bcbcbc" o="#444" />
      <rect x="6" y="24" width="42" height="42" fill="#eee" stroke={DARK_RED} strokeWidth="11" />
      <rect x="6" y="24" width="42" height="42" fill="none" stroke={RED} strokeWidth="6" />
      <Tube d="M8 8L64 62" w={7} c={BLUE} o={NAVY} />
    </>
  ),

  workbench: <SketchShape c="#cf1c1c" />,
  document: (
    <>
      <path d="M4 2H68V70H4Z" fill="#ececec" stroke="#c4c4c4" strokeWidth="3" />
      <circle cx="50" cy="22" r="17" fill="#d41616" />
      <path d="M12 32L30 24L50 32V54L32 66L12 58Z" fill="#2f619f" stroke={NAVY} strokeWidth="4" />
      <path d="M12 32L32 40L50 32M32 40V66" stroke={NAVY} strokeWidth="3" fill="none" />
    </>
  ),
  body: (
    <>
      <path d="M10 20L30 4L44 10V24L66 26V52L38 70L10 56Z" fill="#3a6ba9" stroke={NAVY} strokeWidth="4" />
      <path d="M10 20L24 28V42L40 50L66 30M40 50V68M24 28L44 12" stroke="#1c3f6e" strokeWidth="4" fill="none" />
    </>
  ),
  origin: <path d="M28 2V40L4 64M28 40H70" stroke="#888" strokeWidth="8" fill="none" />,
  pad: (
    <>
      <path d="M4 54L36 44L70 54L36 68Z" fill="#aaa" stroke="#555" strokeWidth="5" />
      <path d="M24 20L64 10V38L44 50L16 44Z" fill="#999" stroke="#555" strokeWidth="5" />
      <path d="M20 2L34 14V30H10V14Z" fill="#222" />
      <path d="M22 8V26" stroke="#fff" strokeWidth="4" />
    </>
  ),
  pocket: (
    <>
      <path d="M4 34L42 10L70 20V42L32 66L4 56Z" fill="#999" stroke="#707070" strokeWidth="4" />
      <path d="M4 34L32 44L70 20M32 44V66" stroke="#707070" strokeWidth="4" fill="none" />
      <path d="M26 32L42 22L52 26L36 36Z" fill="#555" />
    </>
  ),
  chamfer: (
    <>
      <path d="M2 52L18 14L42 4L68 14V56L40 66L4 60Z" fill="#6485aa" stroke="#54749a" strokeWidth="3" />
      <path d="M18 14L44 22L68 14M44 22V60" stroke="#54749a" strokeWidth="3" fill="none" />
      <circle cx="52" cy="50" r="20" fill="#14b45a" />
      <path d="M52 36V58M44 52L52 62L60 52" stroke="#fff" strokeWidth="7" fill="none" />
    </>
  ),
  sketch: <SketchShape c="#c41a1a" />,
  sketchEditing: (
    <>
      <SketchShape c="#6e8aa8" />
      <circle cx="50" cy="22" r="20" fill="#0a22e0" />
      <path d="M40 20L48 28L60 12" stroke="#fff" strokeWidth="6" fill="none" />
    </>
  ),
  logo: (
    <>
      <g fill="#c9141a">
        <rect x="4" y="4" width="18" height="66" />
        <rect x="4" y="4" width="44" height="17" />
        <rect x="4" y="32" width="32" height="14" />
      </g>
      <path d="M4 4L12 12V70H4Z" fill="#8d0c10" />
      <circle cx="50" cy="46" r="19" fill="#5079b6" />
      <circle cx="50" cy="46" r="21" fill="none" stroke="#33588f" strokeWidth="7" strokeDasharray="9 8" />
      <circle cx="50" cy="46" r="7" fill="#fff" />
    </>
  ),
  tasks: (
    <>
      <path d="M2 16L16 2L64 44L50 60Z" fill="#34639f" stroke={NAVY} strokeWidth="4" />
      <path d="M64 44L50 60L70 68Z" fill="#d9c08a" stroke="#222" strokeWidth="3" />
      <path d="M10 14L54 54" stroke="#1c3c66" strokeWidth="4" />
    </>
  ),
};

const Icon = ({ name, size = 24 }: { name: string; size?: number }) => (
  <svg width={size} height={size} viewBox="0 0 72 72" overflow="visible" aria-hidden="true">
    {icons[name]}
  </svg>
);

/* ---------- window frame ---------- */

const Window = styled.div`
  display: flex;
  flex-direction: column;
  height: 100vh;
  border: 1px solid #777;
  background: #f0f0f0;
  color: #1a1a1a;
  font-family: ${UI_FONT};
  font-size: 12px;
  line-height: 16px;
`;
const TitleBar = styled.header`
  display: flex;
  align-items: center;
  height: 30px;
  flex: none;
  padding-left: 7px;
  background: #fff;
`;
const Title = styled.h1`
  flex: 1;
  margin: 0;
  padding-left: 4px;
  font-size: 12px;
  font-weight: 400;
`;
const WindowButton = styled.button`
  display: grid;
  place-items: center;
  width: 48px;
  height: 30px;
`;
const MenuBar = styled.nav`
  display: flex;
  flex: none;
  height: 22px;
  padding: 1px 0 0 1px;
  background: #fff;
`;
const MenuItem = styled.button`
  padding: 0 7px;
  margin-right: 1px;
  u { text-underline-offset: 2px; }
`;

/* ---------- toolbars ---------- */

const ToolRow = styled.div`
  display: flex;
  flex: none;
  height: 35px;
  border-top: 2px solid #fafafa;
  border-bottom: 1px solid #cfcfcf;
`;
const ToolBar = styled.div<{ $w?: number }>`
  display: flex;
  align-items: center;
  flex: ${(p) => (p.$w ? `0 1 ${p.$w}px` : "1")};
  min-width: 0;
  padding-right: 2px;
  border-right: 1px solid #bdbdbd;
  &:last-child { border-right: 0; padding-right: 0; }
`;
const Handle = styled.span`
  flex: none;
  width: 2px;
  height: 26px;
  margin: 0 4px;
  background: repeating-linear-gradient(#b9b9b9 0 1px, transparent 1px 3px);
`;
const Tools = styled.div<{ $w?: number }>`
  display: flex;
  align-items: center;
  flex: ${(p) => (p.$w ? `0 1 ${p.$w}px` : "1")};
  min-width: 0;
`;
const ToolButton = styled.button`
  display: grid;
  place-items: center;
  flex: 1 1 32px;
  min-width: 0;
  height: 30px;
`;
const ArrowButton = styled.button<{ $dim?: boolean }>`
  display: grid;
  place-items: center;
  flex: 0 0 12px;
  height: 30px;
  color: ${(p) => (p.$dim ? "#777" : "#000")};
`;
const Active = styled.span`
  display: flex;
  flex: 1 1 44px;
  min-width: 0;
  background: #c0dcf3;
  outline: 1px solid #8fc8f6;
  outline-offset: -1px;
  ${ArrowButton} { border-left: 1px solid #8fc8f6; }
`;
const Separator = styled.span`
  flex: 0 0 6px;
  height: 25px;
  background: linear-gradient(#d0d0d0, #d0d0d0) 2px 0 / 1px 100% no-repeat;
`;
const More = styled.button`
  flex: 0 0 22px;
  padding-left: 8px;
  font-size: 14px;
  color: #555;
`;
const ComboBox = styled.label`
  display: flex;
  align-items: center;
  flex: 1;
  height: 23px;
  padding: 0 5px;
  gap: 4px;
  background: #e1e1e1;
  border: 1px solid #adadad;
  font-size: 11px;
`;
const ComboSelect = styled.select`
  flex: 1;
  min-width: 0;
  appearance: none;
  border: 0;
  padding: 0;
  background: none;
`;

const Caret = () => (
  <svg width="8" height="4" viewBox="0 0 8 4" aria-hidden="true"><path d="M0 0H8L4 4Z" fill="currentColor" /></svg>
);
const Chevron = ({ open = true, color = "#444", size = 9, w = 2 }: { open?: boolean; color?: string; size?: number; w?: number }) => (
  <svg width={size} height={size} viewBox="0 0 9 9" fill="none" stroke={color} strokeWidth={w} aria-hidden="true">
    <path d={open ? "M0 2L4.5 6.5L9 2" : "M2.5 0L7 4.5L2.5 9"} />
  </svg>
);

/* "|" is a separator; a trailing "+" adds a menu arrow, "-" a dimmed one, "*" marks the pressed tool */
const renderTools = (spec: string) =>
  spec.split(" ").map((token, i) => {
    if (token === "|") return <Separator key={i} />;
    const name = token.replace(/[+*-]/g, "");
    const button = <ToolButton aria-label={name}><Icon name={name} /></ToolButton>;
    const arrow = /[+-]/.test(token) && (
      <ArrowButton $dim={token.includes("-")} aria-label={`${name} options`}><Caret /></ArrowButton>
    );
    return token.includes("*") ? <Active key={i}>{button}{arrow}</Active> : <React.Fragment key={i}>{button}{arrow}</React.Fragment>;
  });

const Strip = ({ w, tools, toolsWidth, children }: { w?: number; tools?: string; toolsWidth?: number; children?: ReactNode }) => (
  <ToolBar $w={w} role="toolbar">
    <Handle />
    {tools && <Tools $w={toolsWidth}>{renderTools(tools)}</Tools>}
    {children}
  </ToolBar>
);

/* ---------- combo panel ---------- */

const Main = styled.main`
  display: flex;
  flex: 1;
  min-height: 0;
  gap: 5px;
`;
const Dock = styled.aside`
  display: flex;
  flex-direction: column;
  flex: none;
  width: 381px;
`;
const DockTitle = styled.h2`
  display: flex;
  align-items: center;
  justify-content: space-between;
  margin: 0;
  height: 20px;
  padding: 3px 5px 0 5px;
  background: #d9d9d9;
  border-right: 1px solid #c2c2c2;
  font-size: 12px;
  font-weight: 400;
`;
const WindowGlyph = styled.button`
  display: grid;
  place-items: center;
`;
const TabList = styled.div`
  display: flex;
  align-items: flex-end;
  padding: 2px 0 0 1px;
`;
const Tab = styled.button<{ $on?: boolean; $w: number }>`
  display: flex;
  align-items: center;
  justify-content: center;
  gap: 4px;
  width: ${(p) => p.$w}px;
  height: ${(p) => (p.$on ? 25 : 23)}px;
  background: ${(p) => (p.$on ? "#fff" : "#f0f0f0")};
  border: 1px solid ${(p) => (p.$on ? "#e4e4e4" : "#d9d9d9")};
  border-width: ${(p) => (p.$on ? "0 1px 0 0" : "1px 1px 0 0")};
  font-size: 11px;
`;
const DockBody = styled.div`
  display: flex;
  flex-direction: column;
  flex: 1;
  min-height: 0;
  gap: 6px;
  padding: 0 3px 0 2px;
  background: #fff;
  border-right: 1px solid #e2e2e2;
`;
const TreeBox = styled.section`
  flex: 0 0 397px;
  border: 1px solid #8e9198;
  border-top-color: #e2e2e2;
`;
const TreeHeader = styled.div`
  display: grid;
  grid-template-columns: 146px 102px 1fr;
  align-items: center;
  height: 26px;
  margin-bottom: 2px;
  span { padding: 6px 4px 2px; height: 24px; border-right: 1px solid #e5e5e5; }
  span:last-child { border: 0; }
`;
const TreeRoot = styled.div`
  padding: 0 3px;
`;
const Tree = styled.ul`
  display: grid;
  grid-auto-rows: 1fr;
  width: 248px;
  height: 185px;
`;
const Branch = styled.li<{ $level: number }>`
  display: flex;
  align-items: stretch;
  padding-left: ${(p) => p.$level * 20 + 6}px;
`;
const Expander = styled.button`
  display: grid;
  place-items: center;
  width: 9px;
  margin-right: 6px;
`;
const Entry = styled.span<{ $tone: string; $bold?: boolean; $short?: boolean }>`
  display: flex;
  align-items: center;
  gap: 5px;
  flex: 1;
  padding-left: 4px;
  margin-right: ${(p) => (p.$short ? 102 : 0)}px;
  background: ${(p) => p.$tone};
  font-weight: ${(p) => (p.$bold ? 700 : 400)};
`;
const Faded = styled.span<{ $on?: boolean }>`
  color: ${(p) => (p.$on ? "#8f8f8f" : "#000")};
`;

const PropertyPane = styled.section`
  display: flex;
  flex-direction: column;
  flex: 1;
  min-height: 0;
  padding: 2px 3px 2px 2px;
`;
const PropertyFrame = styled.div`
  flex: 1;
  border: 1px solid #8e9198;
  border-top-color: #e2e2e2;
`;
const PropertyTable = styled.table`
  width: 100%;
  table-layout: fixed;
  border-collapse: collapse;
  text-align: left;
  th, td { padding: 0 4px; font-weight: 400; }
`;
const HeadRow = styled.tr`
  height: 24px;
  th:first-child { width: 102px; border-right: 1px solid #e5e5e5; }
`;
const GroupRow = styled.tr`
  height: 22px;
  background: #a0a0a0;
  border-bottom: 2px solid #c6c6c6;
  color: #fff;
  th { font-weight: 700; padding: 0 3px; }
`;
const ValueRow = styled.tr`
  height: 21px;
  th { padding-left: 24px; border-right: 2px solid #dadada; background: linear-gradient(90deg, #fff 20px, #f4f4f4 20px); }
  td { padding-left: 3px; background: #f4f4f4; border-bottom: 1px solid #dedede; }
`;
const BottomTabs = styled.div`
  display: flex;
  align-items: flex-start;
  height: 25px;
  flex: none;
  padding-left: 4px;
  background: #fff;
  border-right: 1px solid #e2e2e2;
  border-bottom: 1px solid #e2e2e2;
`;
const BottomTab = styled.button<{ $on?: boolean; $w: number }>`
  width: ${(p) => p.$w}px;
  height: ${(p) => (p.$on ? 21 : 19)}px;
  background: ${(p) => (p.$on ? "#fff" : "#f0f0f0")};
  border-right: 1px solid #d9d9d9;
  border-bottom: 1px solid #d9d9d9;
  font-size: 11px;
`;

type Node = { label: string; icon: string; level: number; open?: boolean; leaf?: boolean; faded?: boolean; tone?: string; bold?: boolean; short?: boolean };
const nodes: Node[] = [
  { label: "My_01", icon: "document", level: 0, open: true, bold: true },
  { label: "Body", icon: "body", level: 1, open: true, bold: true, tone: "#e6e6ff", short: true },
  { label: "Origin", icon: "origin", level: 2, faded: true },
  { label: "Pad", icon: "pad", level: 2, faded: true },
  { label: "Pocket", icon: "pocket", level: 2, faded: true },
  { label: "Chamfer", icon: "chamfer", level: 2, leaf: true, faded: true, tone: "#d9d9d9" },
  { label: "Sketch002", icon: "sketch", level: 2, leaf: true },
  { label: "Sketch003", icon: "sketch", level: 2, leaf: true },
  { label: "Sketch004", icon: "sketchEditing", level: 2, leaf: true, faded: true, tone: "#d9d9d9" },
];

const ComboPanel = () => (
  <Dock>
    <DockTitle>
      Комбо панель
      <WindowGlyph aria-label="Float panel">
        <svg width="9" height="9" viewBox="0 0 9 9" fill="none" stroke="#333" aria-hidden="true">
          <path d="M2.5 2.5V0.5H8.5V6H6.5" /><path d="M2 1H9" strokeWidth="2" />
          <rect x="0.5" y="3.5" width="6" height="5" /><path d="M0 4H7" strokeWidth="2" />
        </svg>
      </WindowGlyph>
    </DockTitle>
    <TabList role="tablist">
      <Tab role="tab" $on $w={64}>Модель</Tab>
      <Tab role="tab" $w={78}><Icon name="tasks" size={16} />Задачи</Tab>
    </TabList>
    <DockBody>
      <TreeBox>
        <TreeHeader><span>Метки и атрибуты</span><span>Описание</span><span /></TreeHeader>
        <TreeRoot>Приложение</TreeRoot>
        <Tree role="tree">
          {nodes.map((n) => (
            <Branch key={n.label} $level={n.level} role="treeitem">
              <Expander aria-label={`Expand ${n.label}`} disabled={n.leaf}>
                {!n.leaf && <Chevron open={!!n.open} color={n.open ? "#333" : "#8a8a8a"} />}
              </Expander>
              <Entry $tone={n.tone ?? "transparent"} $bold={n.bold} $short={n.short}>
                <Icon name={n.icon} size={16} />
                <Faded $on={n.faded}>{n.label}</Faded>
              </Entry>
            </Branch>
          ))}
        </Tree>
      </TreeBox>
      <PropertyPane>
        <PropertyFrame>
          <PropertyTable>
            <thead>
              <HeadRow><th>Свойство</th><th>Значение</th></HeadRow>
            </thead>
            <tbody>
              <GroupRow><th colSpan={2}>Основание</th></GroupRow>
              <ValueRow><th>Label</th><td>Chamfer</td></ValueRow>
            </tbody>
          </PropertyTable>
        </PropertyFrame>
      </PropertyPane>
    </DockBody>
    <BottomTabs role="tablist">
      <BottomTab role="tab" $w={41}>Вид</BottomTab>
      <BottomTab role="tab" $on $w={67}>Данные</BottomTab>
    </BottomTabs>
  </Dock>
);

/* ---------- 3D view ---------- */

const ViewArea = styled.div`
  display: flex;
  flex-direction: column;
  flex: 1;
  min-width: 0;
`;
const Viewport = styled.div`
  position: relative;
  flex: 1;
  min-height: 0;
  overflow: hidden;
  background: linear-gradient(#333366, #9696aa);
`;
const Scene = styled.svg`
  display: block;
  width: 100%;
  height: 100%;
`;
const NaviCube = styled.svg`
  position: absolute;
  top: 0;
  right: 0;
`;
const AxisCross = styled.svg`
  position: absolute;
  right: 0;
  bottom: 36px;
`;
const DocTabs = styled.div`
  display: flex;
  flex: none;
  height: 24px;
  font-size: 11px;
`;
const DocTab = styled.div`
  display: flex;
  align-items: center;
  gap: 5px;
  padding: 0 14px 0 12px;
  background: #fff;
  border-right: 1px solid #ddd;
  border-bottom: 1px solid #ddd;
`;
const CloseTab = styled.button`
  display: grid;
  place-items: center;
  width: 14px;
  height: 14px;
  border: 1px solid #d2573a;
  border-radius: 2px;
  background: #e5805f;
`;

const SketchView = () => (
  <Viewport>
    <Scene aria-label="Sketch geometry">
      <g transform="translate(-387 -158)">
        <path d="M917.5 158V1200" stroke="#84d4aa" strokeWidth="1.5" />
        <path d="M387 595H4000" stroke="#c4645f" strokeWidth="1.5" />
        <g fill="none" strokeWidth="2">
          <path d="M1048 378V530M1313 530V595" stroke="#c42f98" />
          <path d="M1048 378L1313 530" stroke="#80cca0" strokeWidth="1.5" />
          <path d="M1048 378L1121 504L1313 530" stroke="#fff" />
        </g>
        <circle cx="1048" cy="378" r="3" fill="#ff9080" />
        <circle cx="1313" cy="530" r="3" fill="#ff9080" />
        <circle cx="1121" cy="505" r="3" fill="#1eaa1e" />
        <circle cx="1048" cy="530" r="3" fill="#1eaa1e" />
        <circle cx="918" cy="595" r="3" fill="#ff2a08" />
        <circle cx="1313" cy="595" r="3" fill="#ff2a08" />
        <g fill="none" stroke="#ee1c24" strokeWidth="5" strokeLinecap="round" strokeLinejoin="round">
          <path d="M1113 663C1098 632 1082 598 1063 560" />
          <path d="M1061 581L1057 547L1080 569M1058 550L1066 566" />
          <path d="M1165 639C1155 604 1146 574 1133 534" />
          <path d="M1126 558L1129 523L1151 551M1130 526L1136 541" />
        </g>
      </g>
    </Scene>
    <NaviCube width="100" height="100" viewBox="777 219 300 300" aria-label="Navigation cube">
      <g fill="#9c9cbb">
        <path d="M906 258L929 235L951 258ZM906 480H951L929 504ZM818 346V393L793 370ZM1039 346V393L1063 370Z" />
        <circle cx="1051" cy="246" r="12" />
        <path d="M888 249L893 263C876 268 862 277 850 289L853 300L828 307L830 275L840 282C853 267 869 255 888 249Z" />
        <path d="M968 249L963 263C980 268 994 277 1006 289L1003 300L1029 306L1026 275L1016 282C1003 267 987 255 968 249Z" />
      </g>
      <path d="M880 306H978L992 319V420L978 433H880L865 420V319Z" fill="#a4aac0" stroke="#888da8" strokeWidth="2" />
      <rect x="878" y="317" width="103" height="105" fill="#b9bed0" stroke="#44475c" strokeWidth="2" />
      <path d="M853 335V445" stroke="#0000ff" strokeWidth="4" />
      <path d="M853 445H964" stroke="#ff0000" strokeWidth="4" />
      <path d="M855 443L872 427" stroke="#00d020" strokeWidth="4" />
      <text x="931" y="379" textAnchor="middle" fontFamily='"Liberation Sans", sans-serif' fontWeight="700" fontSize="26" fill="#000">FRONT</text>
      <path d="M976 462L996 454L1016 462V486L996 494L976 486Z" fill="#8385a2" />
      <path d="M976 462L996 469L1016 462L996 454Z" fill="#a0a2bb" />
      <path d="M996 469V494L1016 486V462Z" fill="#6d6f8e" />
      <path d="M1027 468H1049L1038 479Z" fill="#4a4a66" />
    </NaviCube>
    <AxisCross width="60" height="50" viewBox="597 40 180 150" aria-label="Axis cross">
      <path d="M646 166V100" stroke="#3a3a8c" strokeWidth="3" />
      <path d="M646 166H708" stroke="#8c2a36" strokeWidth="3" />
      <path d="M646 76L657 104H635Z" fill="#1e1e8e" />
      <path d="M737 166L706 154V178Z" fill="#8c1c24" />
      <path d="M646 157L655 166L646 175L637 166Z" fill="#1e8c1e" />
      <g fontFamily='"Liberation Sans", sans-serif' fontSize="22" fontWeight="700" fill="#111">
        <text x="647" y="73">Z</text>
        <text x="736" y="163">X</text>
        <text x="646" y="163">Y</text>
      </g>
    </AxisCross>
  </Viewport>
);

/* ---------- status bar ---------- */

const StatusBar = styled.footer`
  display: flex;
  align-items: center;
  flex: none;
  height: 30px;
  padding: 4px 2px 0 2px;
  font-size: 11px;
`;
const StatusText = styled.output`
  flex: 1;
`;
const StatusCell = styled.div<{ $w: number }>`
  display: flex;
  align-items: center;
  justify-content: center;
  gap: 5px;
  width: ${(p) => p.$w}px;
  height: 26px;
  border-left: 1px solid #d5d5d5;
  white-space: nowrap;
`;
const NavStyle = styled.button`
  display: flex;
  align-items: center;
  gap: 5px;
  padding-left: 10px;
  svg:last-child { margin-left: 5px; }
`;
const Grip = styled.span`
  align-self: flex-end;
  width: 18px;
  height: 26px;
  border-left: 1px solid #d5d5d5;
  background: radial-gradient(#b5b5b5, #b5b5b5) 14px 23px / 2px 2px no-repeat,
    linear-gradient(#b5b5b5, #b5b5b5) 11px 23px / 2px 2px no-repeat,
    linear-gradient(#b5b5b5, #b5b5b5) 8px 23px / 2px 2px no-repeat,
    linear-gradient(#b5b5b5, #b5b5b5) 14px 20px / 2px 2px no-repeat,
    linear-gradient(#b5b5b5, #b5b5b5) 11px 20px / 2px 2px no-repeat,
    linear-gradient(#b5b5b5, #b5b5b5) 14px 17px / 2px 2px no-repeat;
`;

export default function App() {
  return (
    <>
      <GlobalStyle />
      <Window>
        <TitleBar>
          <Icon name="logo" size={16} />
          <Title>FreeCAD 0.20.2</Title>
          <WindowButton aria-label="Minimize">
            <svg width="11" height="11"><path d="M0 5.5H11" stroke="#111" /></svg>
          </WindowButton>
          <WindowButton aria-label="Maximize">
            <svg width="11" height="11"><rect x="0.5" y="0.5" width="10" height="10" fill="none" stroke="#111" /></svg>
          </WindowButton>
          <WindowButton aria-label="Close">
            <svg width="11" height="11"><path d="M0.5 0.5L10.5 10.5M10.5 0.5L0.5 10.5" stroke="#222" /></svg>
          </WindowButton>
        </TitleBar>
        <MenuBar>
          <MenuItem><u>Ф</u>айл</MenuItem>
          <MenuItem><u>П</u>равка</MenuItem>
          <MenuItem><u>В</u>ид</MenuItem>
          <MenuItem><u>И</u>нструменты</MenuItem>
          <MenuItem><u>М</u>акросы</MenuItem>
          <MenuItem>S<u>k</u>etch</MenuItem>
          <MenuItem>Окна</MenuItem>
          <MenuItem><u>С</u>правка</MenuItem>
        </MenuBar>
        <ToolRow>
          <Strip w={460} tools="newFile open save print | cut copy paste | undo+ redo- | check+ | refresh | whatsThis" />
          <Strip w={160}>
            <ComboBox>
              <Icon name="workbench" size={16} />
              <ComboSelect aria-label="Workbench" defaultValue="Sketcher">
                <option>Sketcher</option>
              </ComboSelect>
              <Chevron size={8} w={1} />
            </ComboBox>
          </Strip>
          <Strip tools="record stop macroEdit play" toolsWidth={127} />
        </ToolRow>
        <ToolRow>
          <Strip w={587} tools="fitAll fitSelection drawStyle+ boundBox | back forward linkGo+ | zoomRefresh+* isometric | front top right | rear bottom left | measure" />
          <Strip w={151} tools="part group link links-" />
          <Strip w={362} tools="sketchNew sketchLeave sketchEdit sketchView sketchSection sketchMap reorient validate merge mirror stopOp" />
          <Strip w={437} tools="selDof closeShape connect selConstraints selElements selRedundant selConflict internal symmetry clone+ array removeAxes deleteAll" />
          <Strip w={217} tools="polygonGeo+ circleGeo knotPlus knotMinus knotInsert+">
            <More aria-label="More tools">»</More>
          </Strip>
          <Strip tools="swapGeo" />
        </ToolRow>
        <ToolRow>
          <Strip w={649} tools="point line arc+ circle+ conic+ bspline+ | polyline rectangle+ hexagon+ slot | fillet+ trim extend split external carbon construction" />
          <Strip
            tools="coincident pointOn vertical horizontal parallel perpendicular tangent equal symmetric block | lock distX distY distance diameter+ angle snell | toggleDriving toggleActive"
            toolsWidth={628}
          />
        </ToolRow>
        <Main>
          <ComboPanel />
          <ViewArea>
            <SketchView />
            <DocTabs>
              <DocTab>
                <Icon name="logo" size={16} />
                My_01 : 1*
                <CloseTab aria-label="Close document">
                  <svg width="8" height="8"><path d="M1 1L7 7M7 1L1 7" stroke="#fff" strokeWidth="2" /></svg>
                </CloseTab>
              </DocTab>
            </DocTabs>
          </ViewArea>
        </Main>
        <StatusBar>
          <StatusText>Preselected: My_01.Body.Sketch004.Vertex9 (18.000000 mm,-11.001074 µm,9.000001 mm)</StatusText>
          <StatusCell $w={83}>
            <NavStyle>
              <svg width="10" height="15" viewBox="0 0 10 15" fill="none" stroke="#222" strokeWidth="1.5">
                <rect x="1" y="1" width="8" height="13" rx="4" /><path d="M5 4V7" />
              </svg>
              CAD
              <Caret />
            </NavStyle>
          </StatusCell>
          <StatusCell $w={132}>195,84 mm x 122,14 mm</StatusCell>
          <Grip />
        </StatusBar>
      </Window>
    </>
  );
}
